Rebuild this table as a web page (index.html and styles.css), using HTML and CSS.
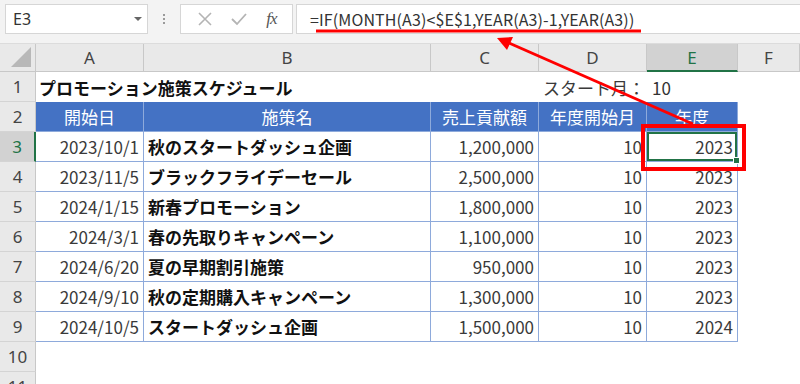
FILE: index.html
```html
<!DOCTYPE html>
<html lang="ja">
<head>
<meta charset="utf-8">
<link rel="stylesheet" href="styles.css">
</head>
<body>
<div class="app">
  <div class="toolbar">
    <div class="namebox"><span class="nb-text">E3</span><svg class="caret" width="8" height="5" viewBox="0 0 8 5"><polygon points="0,0 8,0 4,4" fill="#666"/></svg></div>
    <div class="grip"><i></i><i></i><i></i></div>
    <div class="fbuttons">
      <svg class="ico" width="14" height="14" viewBox="0 0 14 14"><path d="M1 1 L13 13 M13 1 L1 13" stroke="#b4b4b4" stroke-width="1.6" fill="none"/></svg>
      <svg class="ico" width="16" height="14" viewBox="0 0 16 14"><path d="M1 7 L6 12 L15 2" stroke="#b4b4b4" stroke-width="1.8" fill="none"/></svg>
      <span class="fx">fx</span>
    </div>
    <div class="formula"><span class="ftext">=IF(MONTH(A3)&lt;$E$1,YEAR(A3)-1,YEAR(A3))</span></div>
  </div>
  <div class="sheet">
    <div class="corner"><span class="tri"></span></div>
    <div class="ch">A</div><div class="ch">B</div><div class="ch">C</div><div class="ch">D</div><div class="ch sel">E</div><div class="ch">F</div>

    <div class="rh">1</div>
    <div class="c b title">プロモーション施策スケジュール</div><div class="c"></div><div class="c"></div>
    <div class="c num lbl">スタート月：</div><div class="c val">10</div><div class="c"></div>

    <div class="rh">2</div>
    <div class="c t hd">開始日</div><div class="c t hd">施策名</div><div class="c t hd">売上貢献額</div><div class="c t hd">年度開始月</div><div class="c t hd">年度</div><div class="c"></div>

    <div class="rh sel">3</div>
    <div class="c t num">2023/10/1</div><div class="c t b">秋のスタートダッシュ企画</div><div class="c t num">1,200,000</div><div class="c t num">10</div><div class="c t num active">2023<span class="handle"></span></div><div class="c"></div>

    <div class="rh">4</div>
    <div class="c t num">2023/11/5</div><div class="c t b">ブラックフライデーセール</div><div class="c t num">2,500,000</div><div class="c t num">10</div><div class="c t num">2023</div><div class="c"></div>

    <div class="rh">5</div>
    <div class="c t num">2024/1/15</div><div class="c t b">新春プロモーション</div><div class="c t num">1,800,000</div><div class="c t num">10</div><div class="c t num">2023</div><div class="c"></div>

    <div class="rh">6</div>
    <div class="c t num">2024/3/1</div><div class="c t b">春の先取りキャンペーン</div><div class="c t num">1,100,000</div><div class="c t num">10</div><div class="c t num">2023</div><div class="c"></div>

    <div class="rh">7</div>
    <div class="c t num">2024/6/20</div><div class="c t b">夏の早期割引施策</div><div class="c t num">950,000</div><div class="c t num">10</div><div class="c t num">2023</div><div class="c"></div>

    <div class="rh">8</div>
    <div class="c t num">2024/9/10</div><div class="c t b">秋の定期購入キャンペーン</div><div class="c t num">1,300,000</div><div class="c t num">10</div><div class="c t num">2023</div><div class="c"></div>

    <div class="rh">9</div>
    <div class="c t num">2024/10/5</div><div class="c t b">スタートダッシュ企画</div><div class="c t num">1,500,000</div><div class="c t num">10</div><div class="c t num">2024</div><div class="c"></div>

    <div class="rh">10</div>
    <div class="c"></div><div class="c"></div><div class="c"></div><div class="c"></div><div class="c"></div><div class="c"></div>

    <div class="rh">11</div>
    <div class="c"></div><div class="c"></div><div class="c"></div><div class="c"></div><div class="c"></div><div class="c"></div>
  </div>
  <svg class="annot" width="800" height="384" viewBox="0 0 800 384">
    <line x1="316" y1="31" x2="641" y2="31" stroke="#ff0000" stroke-width="3"/>
    <rect x="643" y="126" width="101" height="43" fill="none" stroke="#ff0000" stroke-width="4"/>
    <line x1="693" y1="124" x2="509" y2="43" stroke="#ff0000" stroke-width="3"/>
    <polygon points="497,38 513,37 507,50" fill="#ff0000"/>
  </svg>
</div>
</body>
</html>
```

FILE: styles.css
```css
html, body {
  margin: 0;
  padding: 0;
  background: #ffffff;
  overflow: hidden;
}

.app {
  position: relative;
  width: 800px;
  height: 384px;
  overflow: hidden;
  font-family: "Noto Sans CJK JP", "Noto Sans", sans-serif;
  color: #333333;
}

.toolbar {
  height: 44px;
  background: #f3f3f3;
  display: flex;
  align-items: flex-start;
  padding: 4px 0 0 5px;
  box-sizing: border-box;
  border-bottom: 1px solid #dcdcdc;
}

.namebox {
  width: 143px;
  height: 30px;
  box-sizing: border-box;
  background: #ffffff;
  border: 1px solid #d6d6d6;
  display: flex;
  align-items: center;
  justify-content: space-between;
  padding: 0 5px 0 7px;
}

.nb-text {
  font-family: "Noto Sans", sans-serif;
  font-size: 16px;
  color: #333;
}

.caret {
  display: block;
}

.grip {
  width: 32px;
  height: 30px;
  display: flex;
  flex-direction: column;
  align-items: center;
  justify-content: center;
  gap: 2px;
}

.grip i {
  display: block;
  width: 2px;
  height: 2px;
  background: #9a9a9a;
}

.fbuttons {
  width: 113px;
  height: 30px;
  box-sizing: border-box;
  background: #ffffff;
  border: 1px solid #d6d6d6;
  display: flex;
  align-items: center;
  justify-content: space-around;
  padding: 0 6px 0 8px;
}

.ico {
  display: block;
}

.fx {
  font-family: "Liberation Serif", serif;
  font-style: italic;
  font-size: 17px;
  color: #555;
  letter-spacing: -1px;
}

.formula {
  flex: 1;
  height: 30px;
  margin-left: 3px;
  box-sizing: border-box;
  background: #ffffff;
  border: 1px solid #d6d6d6;
  border-right: none;
  display: flex;
  align-items: center;
  padding-left: 13px;
}

.ftext {
  font-family: "Noto Sans CJK JP", sans-serif;
  font-size: 16px;
  letter-spacing: 0.12px;
  color: #333;
  white-space: nowrap;
}

.sheet {
  display: grid;
  grid-template-columns: 36px 108px 287px 108px 108px 91px 62px;
  grid-template-rows: 28px repeat(11, 30px);
}

.corner {
  position: relative;
  background: #e9e9e9;
  border-right: 1px solid #c8c8c8;
  border-bottom: 1px solid #c8c8c8;
}

.tri {
  position: absolute;
  right: 4px;
  bottom: 4px;
  width: 0;
  height: 0;
  border-left: 20px solid transparent;
  border-bottom: 20px solid #b8b8b8;
}

.ch {
  background: #e9e9e9;
  border-right: 1px solid #c8c8c8;
  border-bottom: 1px solid #c8c8c8;
  display: flex;
  align-items: center;
  justify-content: center;
  font-family: "Noto Sans", sans-serif;
  font-size: 17px;
  color: #444;
}

.ch.sel {
  background: #d2d2d2;
  color: #217346;
  border-bottom: 2px solid #217346;
}

.rh {
  background: #e9e9e9;
  border-right: 1px solid #c8c8c8;
  border-bottom: 1px solid #d4d4d4;
  display: flex;
  align-items: center;
  justify-content: center;
  font-family: "Noto Sans", sans-serif;
  font-size: 17px;
  color: #444;
  box-sizing: border-box;
}

.rh.sel {
  background: #d2d2d2;
  color: #217346;
  border-right: 2px solid #217346;
}

.c {
  display: flex;
  align-items: center;
  padding: 0 4px;
  font-size: 17px;
  white-space: nowrap;
  box-sizing: border-box;
  min-width: 0;
}

.t {
  border-right: 1px solid #8eaadb;
  border-bottom: 1px solid #8eaadb;
}

.hd {
  background: #4472c4;
  color: #ffffff;
  justify-content: center;
}

.num {
  justify-content: flex-end;
  color: #3a3a3a;
}

.b {
  font-weight: bold;
  color: #111;
}

.title {
  overflow: visible;
  padding-left: 3px;
}

.lbl {
  padding-right: 2px;
}

.val {
  padding-left: 5px;
}

.active {
  position: relative;
  box-shadow: inset 0 0 0 2px #217346;
}

.handle {
  position: absolute;
  right: -3px;
  bottom: -3px;
  width: 5px;
  height: 5px;
  background: #217346;
  border: 1px solid #ffffff;
}

.annot {
  position: absolute;
  left: 0;
  top: 0;
  pointer-events: none;
}
```
